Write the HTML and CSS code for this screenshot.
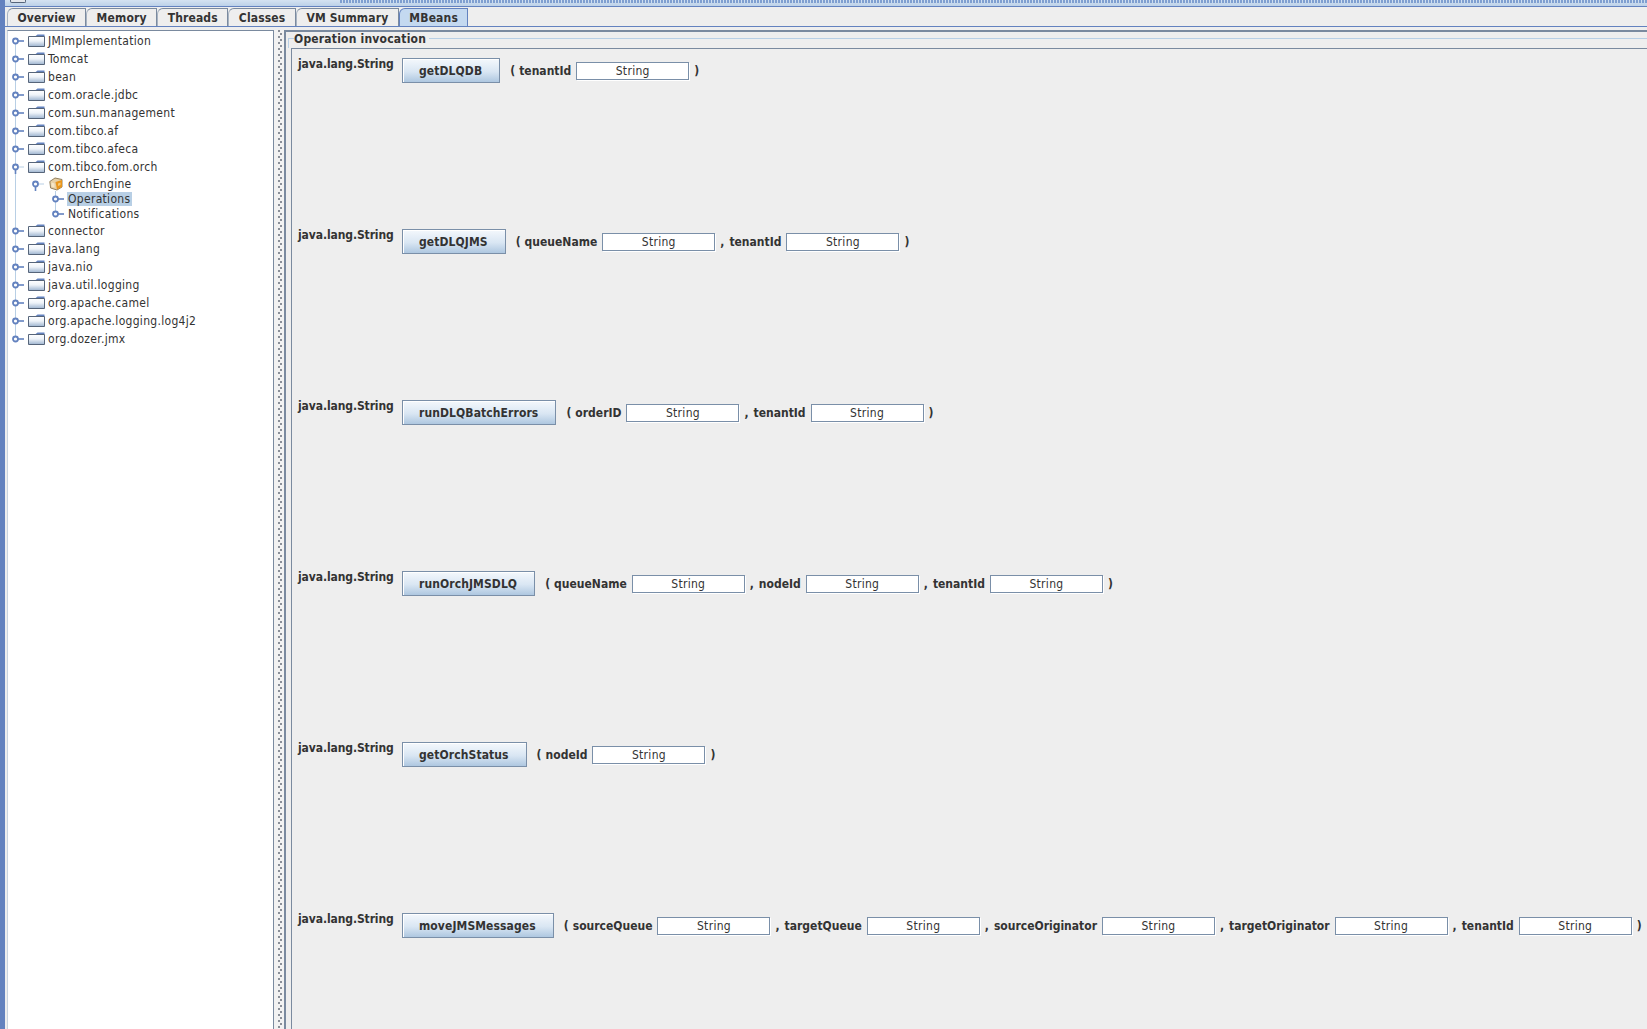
FILE: index.html
```html
<!DOCTYPE html>
<html lang="en">
<head>
<meta charset="utf-8">
<title>MBeans</title>
<link rel="stylesheet" href="styles.css">
</head>
<body>
<svg class="defs" width="0" height="0">
  <defs>
    <linearGradient id="fg" x1="0" y1="0" x2="0" y2="1"><stop offset="0" stop-color="#ffffff"/><stop offset=".45" stop-color="#eef3f9"/><stop offset="1" stop-color="#9db4cf"/></linearGradient>
    <symbol id="folder" viewBox="0 0 17 13"><path d="M7 2.5 9.5 .5H16.5V2.5Z" fill="#6382bf"/><path d="M.5 2.5H16.5V12.5H.5Z" fill="url(#fg)" stroke="#56657a"/></symbol>
    <symbol id="closed" viewBox="0 0 12 18"><path d="M5 9H12" stroke="#6382bf" stroke-width="1.6"/><circle cx="3.5" cy="9" r="2.5" fill="#fff" stroke="#6382bf" stroke-width="1.8"/></symbol>
    <symbol id="open" viewBox="0 0 12 18"><path d="M5 9H12" stroke="#b8cfe5"/><path d="M3.5 10V16" stroke="#6382bf" stroke-width="1.6"/><circle cx="3.5" cy="9" r="2.5" fill="#fff" stroke="#6382bf" stroke-width="1.8"/></symbol>
    <symbol id="bean" viewBox="0 0 14 14"><path d="M.8 4.5 6 1 13 2.5V10L8 13 1.6 11Z" fill="#e6d0a6" stroke="#93805f"/><path d="M6.5 5 13 3V10L8 12.4Z" fill="#e9961c"/><path d="M2.5 5.5V9.5L5.5 10.5V6.5Z" fill="#f6e7c8"/><path d="M9 6.5 11.5 5.5V8L9 9Z" fill="#f3c878"/></symbol>
  </defs>
</svg>
<div class="titlebar">
  <div class="window-icon"></div>
  <div class="title-dots"></div>
</div>
<div class="window">
  <nav class="tabs">
    <div class="tab">Overview</div>
    <div class="tab">Memory</div>
    <div class="tab">Threads</div>
    <div class="tab">Classes</div>
    <div class="tab">VM Summary</div>
    <div class="tab tab-active">MBeans</div>
  </nav>
  <div class="tab-body">
    <aside class="tree">
      <div class="node"><svg class="handle"><use href="#closed"/></svg><svg class="folder"><use href="#folder"/></svg><span>JMImplementation</span></div>
      <div class="node"><svg class="handle"><use href="#closed"/></svg><svg class="folder"><use href="#folder"/></svg><span>Tomcat</span></div>
      <div class="node"><svg class="handle"><use href="#closed"/></svg><svg class="folder"><use href="#folder"/></svg><span>bean</span></div>
      <div class="node"><svg class="handle"><use href="#closed"/></svg><svg class="folder"><use href="#folder"/></svg><span>com.oracle.jdbc</span></div>
      <div class="node"><svg class="handle"><use href="#closed"/></svg><svg class="folder"><use href="#folder"/></svg><span>com.sun.management</span></div>
      <div class="node"><svg class="handle"><use href="#closed"/></svg><svg class="folder"><use href="#folder"/></svg><span>com.tibco.af</span></div>
      <div class="node"><svg class="handle"><use href="#closed"/></svg><svg class="folder"><use href="#folder"/></svg><span>com.tibco.afeca</span></div>
      <div class="node"><svg class="handle"><use href="#open"/></svg><svg class="folder"><use href="#folder"/></svg><span>com.tibco.fom.orch</span></div>
      <div class="group">
        <div class="node node-bean"><svg class="handle"><use href="#open"/></svg><svg class="bean"><use href="#bean"/></svg><span>orchEngine</span></div>
        <div class="leaves">
          <div class="node node-leaf"><svg class="handle"><use href="#closed"/></svg><span class="selected">Operations</span></div>
          <div class="node node-leaf"><svg class="handle"><use href="#closed"/></svg><span>Notifications</span></div>
        </div>
      </div>
      <div class="node"><svg class="handle"><use href="#closed"/></svg><svg class="folder"><use href="#folder"/></svg><span>connector</span></div>
      <div class="node"><svg class="handle"><use href="#closed"/></svg><svg class="folder"><use href="#folder"/></svg><span>java.lang</span></div>
      <div class="node"><svg class="handle"><use href="#closed"/></svg><svg class="folder"><use href="#folder"/></svg><span>java.nio</span></div>
      <div class="node"><svg class="handle"><use href="#closed"/></svg><svg class="folder"><use href="#folder"/></svg><span>java.util.logging</span></div>
      <div class="node"><svg class="handle"><use href="#closed"/></svg><svg class="folder"><use href="#folder"/></svg><span>org.apache.camel</span></div>
      <div class="node"><svg class="handle"><use href="#closed"/></svg><svg class="folder"><use href="#folder"/></svg><span>org.apache.logging.log4j2</span></div>
      <div class="node"><svg class="handle"><use href="#closed"/></svg><svg class="folder"><use href="#folder"/></svg><span>org.dozer.jmx</span></div>
    </aside>
    <div class="splitter"></div>
    <main class="content">
      <div class="legend"><span>Operation invocation</span></div>
      <div class="ops">
        <div class="op"><div class="ret">java.lang.String</div><div class="btn">getDLQDB</div><div class="params"><span class="open">(</span><span>tenantId</span><div class="field">String</div><span>)</span></div></div>
        <div class="op"><div class="ret">java.lang.String</div><div class="btn">getDLQJMS</div><div class="params"><span class="open">(</span><span>queueName</span><div class="field">String</div><span>,</span><span>tenantId</span><div class="field">String</div><span>)</span></div></div>
        <div class="op"><div class="ret">java.lang.String</div><div class="btn">runDLQBatchErrors</div><div class="params"><span class="open">(</span><span>orderID</span><div class="field">String</div><span>,</span><span>tenantId</span><div class="field">String</div><span>)</span></div></div>
        <div class="op"><div class="ret">java.lang.String</div><div class="btn">runOrchJMSDLQ</div><div class="params"><span class="open">(</span><span>queueName</span><div class="field">String</div><span>,</span><span>nodeId</span><div class="field">String</div><span>,</span><span>tenantId</span><div class="field">String</div><span>)</span></div></div>
        <div class="op"><div class="ret">java.lang.String</div><div class="btn">getOrchStatus</div><div class="params"><span class="open">(</span><span>nodeId</span><div class="field">String</div><span>)</span></div></div>
        <div class="op"><div class="ret">java.lang.String</div><div class="btn">moveJMSMessages</div><div class="params"><span class="open">(</span><span>sourceQueue</span><div class="field">String</div><span>,</span><span>targetQueue</span><div class="field">String</div><span>,</span><span>sourceOriginator</span><div class="field">String</div><span>,</span><span>targetOriginator</span><div class="field">String</div><span>,</span><span>tenantId</span><div class="field">String</div><span>)</span></div></div>
      </div>
    </main>
  </div>
</div>
</body>
</html>
```

FILE: styles.css
```css
* { box-sizing: border-box; }
html, body { margin: 0; height: 100%; overflow: hidden; }
body {
  width: 1647px; height: 1029px;
  display: flex; flex-direction: column;
  background: #eeeeee; color: #333;
  font: 12px "DejaVu Sans Condensed", "DejaVu Sans", sans-serif;
  font-stretch: condensed;
}
.defs { position: absolute; }
.titlebar {
  height: 7px; flex: none;
  background: linear-gradient(#d4e2f1, #bcd1e8);
  display: flex; align-items: flex-start;
  border-bottom: 1px solid #6382bf;
  border-left: 5px solid #6382bf;
}
.window-icon { width: 16px; height: 3px; margin-left: 5px; background: #e4e7ec; border: 1px solid #56657a; border-top: 0; border-radius: 0 0 2px 2px; flex: none; }
.title-dots {
  flex: 1; height: 3px; margin-left: 314px;
  background: radial-gradient(circle at 1px 1px, #7f9fd0 .8px, transparent 1px) 0 0 / 3px 2px;
}
.window {
  flex: 1; min-height: 0; display: flex; flex-direction: column;
  border-left: 5px solid #6382bf;
}
.tabs {
  display: flex; height: 20px; padding: 1px 0 0 2px; flex: none;
  border-bottom: 1px solid #6382bf;
}
.tab {
  height: 18px; padding: 0 9.5px;
  display: flex; align-items: center;
  font-weight: bold; letter-spacing: .15px;
  background: #eeeeee;
  border: 1px solid #7a8a9f; border-bottom: 0; border-left-color: #a7b3c2;
  border-radius: 6px 0 0 0;
}
.tab-active { background: #c4d9f0; border-color: #6382bf; }
.tab-body { flex: 1; min-height: 0; display: flex; padding: 3px 0 0 2px; overflow: hidden; }
.tree {
  width: 267px; flex: none; position: relative;
  background: #fff; padding-top: 1px;
  border-top: 1px solid #7a8a9f; border-right: 1px solid #7a8a9f;
  border-left: 1px solid #c9d4e0;
  letter-spacing: .3px;
}
.tree::before { content: ""; position: absolute; left: 7px; top: 10px; height: 300px; width: 1px; background: #b8cfe5; }
.node { height: 18px; display: flex; align-items: center; white-space: nowrap; position: relative; }
.handle { width: 12px; height: 18px; margin-left: 4px; flex: none; }
.folder { width: 17px; height: 13px; margin: -1px 2px 0 4px; flex: none; }
.node span { padding: 0 1px; }
.group { position: relative; }
.node-bean { padding-left: 20px; height: 15px; }
.node-leaf { padding-left: 40px; height: 15px; }
.bean { width: 14px; height: 14px; margin: 0 4px 0 5px; flex: none; }
.leaves { position: relative; margin-bottom: 1px; }
.leaves::before { content: ""; position: absolute; left: 47px; top: 0; height: 22px; width: 1px; background: #b8cfe5; }
.node-leaf .handle { margin-right: 3px; }
.node .selected { background: #b8cfe5; padding-right: 2px; }
.splitter {
  width: 10px; flex: none;
  background:
    radial-gradient(circle at 5px 1px, #8a8f98 .8px, transparent 1px),
    radial-gradient(circle at 7px 4px, #8a8f98 .8px, transparent 1px),
    #f2f2f2;
  background-size: 10px 6px;
}
.content {
  flex: 1; min-width: 0; display: flex; flex-direction: column;
  border-top: 2px solid #7a8a9f; border-left: 2px solid #7a8a9f;
  padding: 6px 0 0 2px; font-weight: bold;
}
.legend {
  height: 10px; flex: none;
  border-top: 1px solid #b8cfe5; border-left: 1px solid #b8cfe5;
  padding-left: 5px; letter-spacing: .2px;
}
.legend span { display: block; width: max-content; margin-top: -7px; line-height: 14px; padding-right: 3px; background: #eeeeee; }
.ops {
  flex: 1; min-height: 0; overflow: hidden; margin-left: 3px;
  border-top: 1px solid #7a8a9f; border-left: 1px solid #7a8a9f;
  padding: 9px 0 0 6px;
  display: flex; flex-direction: column;
}
.op { height: 171px; flex: none; display: flex; align-items: flex-start; white-space: nowrap; }
.op:last-child { height: auto; }
.ret { width: 104px; flex: none; margin-top: -1px; line-height: 14px; letter-spacing: -.1px; }
.btn {
  height: 25px; padding: 0 17px 0 16px;
  display: flex; align-items: center; letter-spacing: .1px;
  border: 1px solid #7a8fa8;
  box-shadow: inset 1px 1px 0 #fff;
  background: linear-gradient(#f4f8fc 0%, #d9e6f3 55%, #aec7e0 100%);
}
.params { display: flex; align-items: center; gap: 5px; height: 25px; margin-left: 10px; }
.open { margin-right: -1px; }
.field {
  width: 113px; height: 18px;
  display: flex; align-items: center; justify-content: center;
  font-weight: normal; letter-spacing: .3px; background: #fff;
  border: 1px solid #7a8fa8;
  box-shadow: 1px 1px 0 #fff;
}
```
